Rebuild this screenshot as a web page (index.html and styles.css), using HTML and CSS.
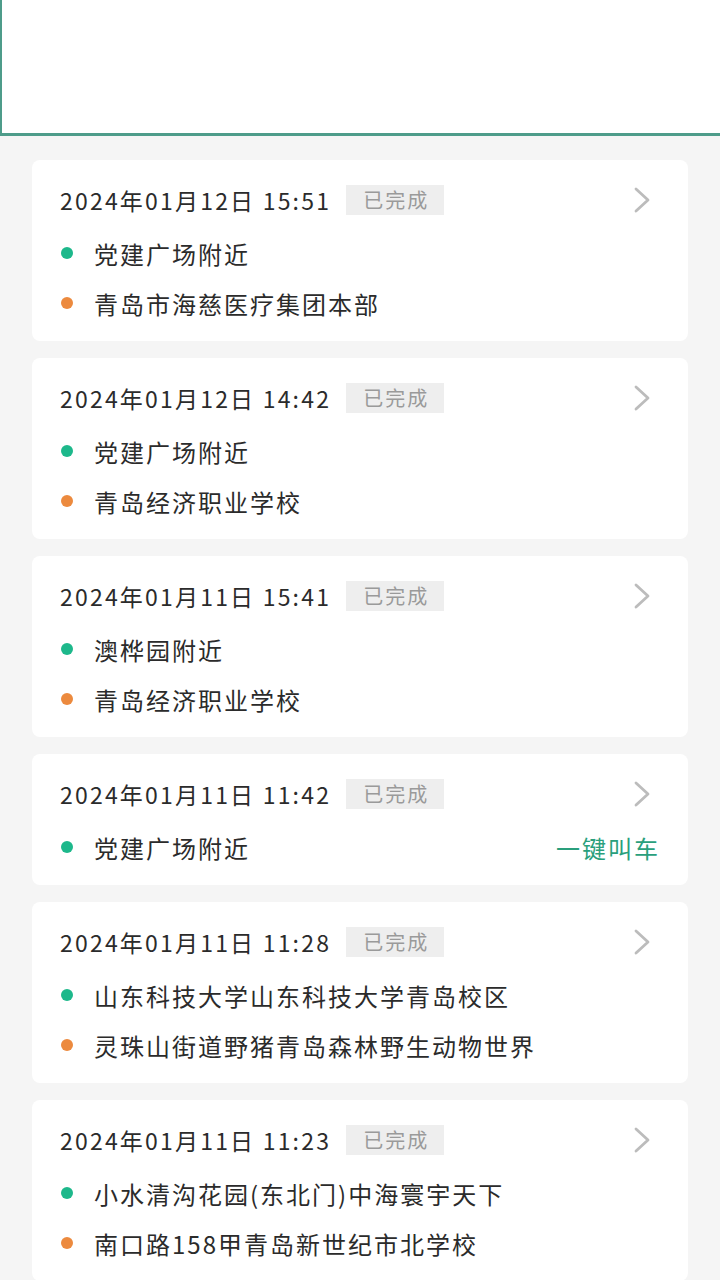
FILE: index.html
```html
<!DOCTYPE html>
<html lang="zh-CN">
<head>
    <meta charset="UTF-8">
    <meta name="viewport" content="width=device-width, initial-scale=1.0">
    <title>我的行程</title>
    <link rel="stylesheet" href="styles.css">
</head>
<body>

    <!-- Kartenbereich oben -->
    <div class="map-box"></div>

    <!-- Liste der Fahrten -->
    <div class="trip-list">

        <div class="trip-card">
            <div class="trip-head">
                <span class="trip-time">2024年01月12日 15:51</span>
                <span class="trip-status">已完成</span>
                <svg class="chevron" viewBox="0 0 18 26"><path d="M3 2 L15 13 L3 24"/></svg>
            </div>
            <ul class="trip-points">
                <li><span class="dot start"></span>党建广场附近</li>
                <li><span class="dot end"></span>青岛市海慈医疗集团本部</li>
            </ul>
        </div>

        <div class="trip-card">
            <div class="trip-head">
                <span class="trip-time">2024年01月12日 14:42</span>
                <span class="trip-status">已完成</span>
                <svg class="chevron" viewBox="0 0 18 26"><path d="M3 2 L15 13 L3 24"/></svg>
            </div>
            <ul class="trip-points">
                <li><span class="dot start"></span>党建广场附近</li>
                <li><span class="dot end"></span>青岛经济职业学校</li>
            </ul>
        </div>

        <div class="trip-card">
            <div class="trip-head">
                <span class="trip-time">2024年01月11日 15:41</span>
                <span class="trip-status">已完成</span>
                <svg class="chevron" viewBox="0 0 18 26"><path d="M3 2 L15 13 L3 24"/></svg>
            </div>
            <ul class="trip-points">
                <li><span class="dot start"></span>澳桦园附近</li>
                <li><span class="dot end"></span>青岛经济职业学校</li>
            </ul>
        </div>

        <div class="trip-card">
            <div class="trip-head">
                <span class="trip-time">2024年01月11日 11:42</span>
                <span class="trip-status">已完成</span>
                <svg class="chevron" viewBox="0 0 18 26"><path d="M3 2 L15 13 L3 24"/></svg>
            </div>
            <ul class="trip-points">
                <li><span class="dot start"></span>党建广场附近<a class="call-car" href="#">一键叫车</a></li>
            </ul>
        </div>

        <div class="trip-card">
            <div class="trip-head">
                <span class="trip-time">2024年01月11日 11:28</span>
                <span class="trip-status">已完成</span>
                <svg class="chevron" viewBox="0 0 18 26"><path d="M3 2 L15 13 L3 24"/></svg>
            </div>
            <ul class="trip-points">
                <li><span class="dot start"></span>山东科技大学山东科技大学青岛校区</li>
                <li><span class="dot end"></span>灵珠山街道野猪青岛森林野生动物世界</li>
            </ul>
        </div>

        <div class="trip-card">
            <div class="trip-head">
                <span class="trip-time">2024年01月11日 11:23</span>
                <span class="trip-status">已完成</span>
                <svg class="chevron" viewBox="0 0 18 26"><path d="M3 2 L15 13 L3 24"/></svg>
            </div>
            <ul class="trip-points">
                <li><span class="dot start"></span>小水清沟花园(东北门)中海寰宇天下</li>
                <li><span class="dot end"></span>南口路158甲青岛新世纪市北学校</li>
            </ul>
        </div>

    </div>

</body>
</html>
```

FILE: styles.css
```css
body {
    font-family: "Noto Sans CJK SC", "Noto Sans", sans-serif;
    background-color: #f5f5f5;
    color: #2b2b2b;
    margin: 0;
    padding: 0;
}

/* Kartenbereich */
.map-box {
    height: 133px;
    background-color: #ffffff;
    border-left: 2px solid #4e9c8a;
    border-bottom: 3px solid #4e9c8a;
}

.trip-list {
    display: flex;
    flex-direction: column;
    gap: 17px;
    padding: 24px 32px;
}

.trip-card {
    background-color: #ffffff;
    border-radius: 8px;
    padding: 24px 28px 22px;
}

.trip-head {
    display: flex;
    align-items: center;
    height: 32px;
}

.trip-time {
    font-size: 23px;
    letter-spacing: 2.2px;
}

.trip-status {
    margin-left: 15px;
    background-color: #eeeeee;
    color: #9a9a9a;
    font-size: 20px;
    letter-spacing: 2px;
    line-height: 30px;
    padding: 0 15px 0 17px;
}

.chevron {
    margin-left: auto;
    margin-right: 9px;
    width: 18px;
    height: 26px;
    fill: none;
    stroke: #bcbcbc;
    stroke-width: 2.8;
    stroke-linecap: round;
    stroke-linejoin: round;
}

.trip-points {
    list-style: none;
    margin: 0;
    padding: 21px 0 0;
    display: flex;
    flex-direction: column;
    gap: 18px;
}

.trip-points li {
    display: flex;
    align-items: center;
    height: 32px;
    font-size: 24px;
    letter-spacing: 2px;
}

.dot {
    width: 12px;
    height: 12px;
    border-radius: 50%;
    margin: 0 21px 0 1px;
    flex-shrink: 0;
}

.dot.start {
    background-color: #1db88b;
}

.dot.end {
    background-color: #ec8a3e;
}

/* Link rechts unten */
.call-car {
    margin-left: auto;
    color: #2a9f7c;
    text-decoration: none;
}
```
